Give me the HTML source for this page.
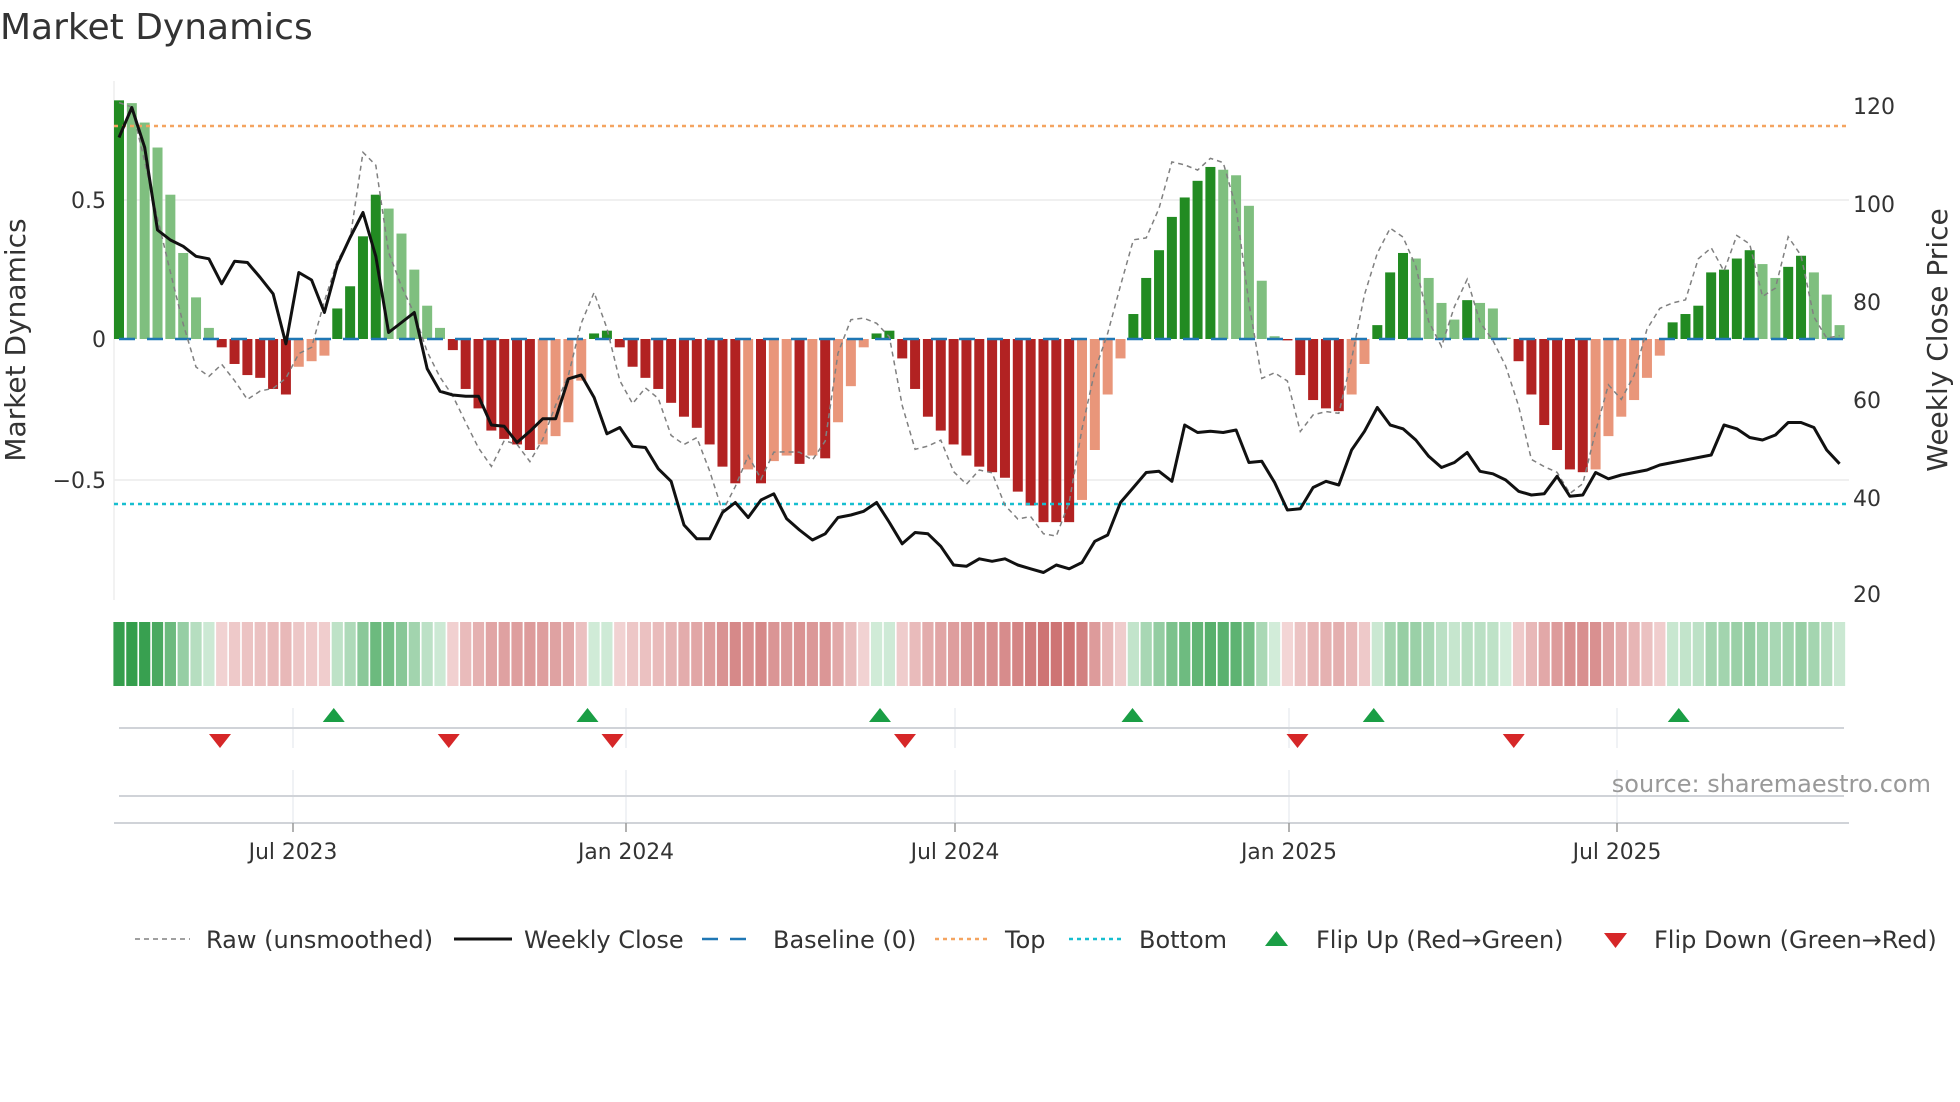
<!DOCTYPE html>
<html><head><meta charset="utf-8">
<style>
html,body{margin:0;padding:0;background:#fff;}
svg{display:block;font-family:"DejaVu Sans","Liberation Sans",sans-serif;}
</style></head>
<body>
<svg id="c" width="1960" height="1102" viewBox="0 0 1960 1102" xmlns="http://www.w3.org/2000/svg">
<rect width="1960" height="1102" fill="#fff"/>
<text x="0" y="39" font-size="36" fill="#333">Market Dynamics</text>
<line x1="114" y1="200" x2="1849" y2="200" stroke="#ececec" stroke-width="1.5"/>
<line x1="114" y1="480" x2="1849" y2="480" stroke="#ececec" stroke-width="1.5"/>
<line x1="114" y1="81" x2="114" y2="600" stroke="#eeeeee" stroke-width="1.5"/>
<g id="bars"></g>
<line x1="114" y1="126" x2="1849" y2="126" stroke="#f4a460" stroke-width="2.5" stroke-dasharray="4,4"/>
<line x1="114" y1="504" x2="1849" y2="504" stroke="#17becf" stroke-width="2.5" stroke-dasharray="4,4"/>
<line x1="119" y1="339" x2="1849" y2="339" stroke="#1f77b4" stroke-width="2.5" stroke-dasharray="16,12"/>
<polyline id="raw" fill="none" stroke="#808080" stroke-width="1.5" stroke-dasharray="5,4"/>
<polyline id="price" fill="none" stroke="#111" stroke-width="3" stroke-linejoin="round"/>
<g font-size="22" fill="#333" text-anchor="end">
<text x="106" y="208">0.5</text>
<text x="106" y="347">0</text>
<text x="106" y="488">−0.5</text>
</g>
<g font-size="22" fill="#333">
<text x="1853" y="114">120</text>
<text x="1853" y="212">100</text>
<text x="1853" y="310">80</text>
<text x="1853" y="408">60</text>
<text x="1853" y="506">40</text>
<text x="1853" y="602">20</text>
</g>
<text transform="translate(25,340) rotate(-90)" font-size="28" fill="#333" text-anchor="middle">Market Dynamics</text>
<text transform="translate(1947,340) rotate(-90)" font-size="28" fill="#333" text-anchor="middle">Weekly Close Price</text>
<g id="heat"></g>
<g stroke="#e6e8ee" stroke-width="1.2">
<line x1="293" y1="708" x2="293" y2="748"/><line x1="626" y1="708" x2="626" y2="748"/><line x1="955" y1="708" x2="955" y2="748"/><line x1="1289" y1="708" x2="1289" y2="748"/><line x1="1617" y1="708" x2="1617" y2="748"/>
<line x1="293" y1="770" x2="293" y2="823"/><line x1="626" y1="770" x2="626" y2="823"/><line x1="955" y1="770" x2="955" y2="823"/><line x1="1289" y1="770" x2="1289" y2="823"/><line x1="1617" y1="770" x2="1617" y2="823"/>
</g>
<line x1="119" y1="728" x2="1844" y2="728" stroke="#d0d3d8" stroke-width="2"/>
<line x1="119" y1="796" x2="1844" y2="796" stroke="#d0d3d8" stroke-width="2"/>
<line x1="114" y1="823" x2="1849" y2="823" stroke="#d0d3d8" stroke-width="2"/>
<g id="flips"></g>
<g stroke="#999" stroke-width="1.5">
<line x1="293" y1="823" x2="293" y2="832"/><line x1="626" y1="823" x2="626" y2="832"/><line x1="955" y1="823" x2="955" y2="832"/><line x1="1289" y1="823" x2="1289" y2="832"/><line x1="1617" y1="823" x2="1617" y2="832"/>
</g>
<g font-size="21.8" fill="#333" text-anchor="middle">
<text x="293" y="859">Jul 2023</text>
<text x="626" y="859">Jan 2024</text>
<text x="955" y="859">Jul 2024</text>
<text x="1289" y="859">Jan 2025</text>
<text x="1617" y="859">Jul 2025</text>
</g>
<text x="1931" y="792" font-size="24" fill="#999" text-anchor="end">source: sharemaestro.com</text>
<g font-size="24" fill="#333">
<line x1="135" y1="939" x2="190" y2="939" stroke="#808080" stroke-width="1.5" stroke-dasharray="5,4"/>
<text x="206" y="948">Raw (unsmoothed)</text>
<line x1="454" y1="939" x2="512" y2="939" stroke="#111" stroke-width="3"/>
<text x="524" y="948">Weekly Close</text>
<line x1="702" y1="939" x2="757" y2="939" stroke="#1f77b4" stroke-width="2.5" stroke-dasharray="16,12"/>
<text x="773" y="948">Baseline (0)</text>
<line x1="935" y1="939" x2="990" y2="939" stroke="#f4a460" stroke-width="2.5" stroke-dasharray="4,4"/>
<text x="1005" y="948">Top</text>
<line x1="1069" y1="939" x2="1125" y2="939" stroke="#17becf" stroke-width="2.5" stroke-dasharray="4,4"/>
<text x="1139" y="948">Bottom</text>
<polygon points="1265,946 1288,946 1276.5,931" fill="#1a9e45"/>
<text x="1316" y="948">Flip Up (Red→Green)</text>
<polygon points="1604,933 1627,933 1615.5,948" fill="#d62728"/>
<text x="1654" y="948">Flip Down (Green→Red)</text>
</g>
</svg>
<script>
var v=[.86,.85,.78,.69,.52,.31,.15,.04,-.03,-.09,-.13,-.14,-.18,-.2,-.1,-.08,-.06,
.11,.19,.37,.52,.47,.38,.25,.12,.04,
-.04,-.18,-.25,-.33,-.36,-.38,-.4,-.38,-.35,-.3,-.15,
.02,.03,
-.03,-.1,-.14,-.18,-.23,-.28,-.32,-.38,-.46,-.52,-.47,-.52,-.44,-.42,-.45,-.42,-.43,-.3,-.17,-.03,
.02,.03,
-.07,-.18,-.28,-.33,-.38,-.42,-.46,-.48,-.5,-.55,-.6,-.66,-.66,-.66,-.58,-.4,-.2,-.07,
.09,.22,.32,.44,.51,.57,.62,.61,.59,.48,.21,.01,
-.005,-.13,-.22,-.25,-.26,-.2,-.09,
.05,.24,.31,.29,.22,.13,.07,.14,.13,.11,.005,
-.08,-.2,-.31,-.4,-.47,-.48,-.47,-.35,-.28,-.22,-.14,-.06,
.06,.09,.12,.24,.25,.29,.32,.27,.22,.26,.30,.24,.16,.05];
while(v.length<135)v.push(.05);v=v.slice(0,135);
var py=[110,86,118,184,192,197,205,207,227,209,210,222,235,275,218,224,250,212,190,170,205,266,258,250,295,313,316,317,317,340,341,354,345,335,335,303,300,318,347,342,357,358,375,385,420,431,431,410,402,414,400,395,415,424,432,427,414,412,409,402,418,
435,426,427,437,452,453,447,449,447,452,455,458,452,455,450,433,428,402,390,378,377,385,340,346,345,346,344,370,369,386,408,407,390,385,388,360,345,326,340,343,352,365,374,370,362,377,379,384,393,396,395,381,397,396,378,383,380,378,376,372,370,368,366,364,340,343,350,352,348,338,338,342,360,371];
while(py.length<135)py.push(371);
var NS="http://www.w3.org/2000/svg";
function X(i){return 119+i*12.84;}
function el(t,a,p){var e=document.createElementNS(NS,t);for(var k in a)e.setAttribute(k,a[k]);p.appendChild(e);return e;}
var bars=document.getElementById('bars'),heat=document.getElementById('heat');
function mix(a,b,t){return 'rgb('+[0,1,2].map(function(k){return Math.round(a[k]+(b[k]-a[k])*t)}).join(',')+')';}
for(var i=0;i<135;i++){
 var x=X(i),val=v[i],prev=i?v[i-1]:0,y=339-val*277.5,c;
 if(val>=0)c=(val>=prev)?'#228b22':'#7fbf7f';else c=(val<=prev)?'#b22222':'#e9967a';
 el('rect',{x:x-5,y:Math.min(y,339),width:10,height:Math.max(Math.abs(339-y),1),fill:c},bars);
 var t=Math.min(Math.abs(val)/0.8,1),hc;
 if(val>=0)hc=mix([212,237,219],[52,158,76],t);else hc=mix([243,214,214],[206,116,116],Math.min(Math.abs(val)/0.66,1));
 el('rect',{x:x-5.6,y:622,width:11.2,height:64,fill:hc},heat);
}
var pts=[],rp=[];
for(var i=0;i<135;i++){
 pts.push(X(i).toFixed(1)+','+(py[i]*1.25).toFixed(1));
 var p=i?v[i-1]:v[0],n=i<134?v[i+1]:v[i];
 var r=v[i]+1.6*(n-p)/2+0.05*Math.sin(i*1.7);
 rp.push(X(i).toFixed(1)+','+(339-r*277.5).toFixed(1));
}
document.getElementById('price').setAttribute('points',pts.join(' '));
document.getElementById('raw').setAttribute('points',rp.join(' '));
var fl=document.getElementById('flips');
[267,470,704,906,1099,1343].forEach(function(d){var x=d*1.25;el('polygon',{points:(x-11)+',722 '+(x+11)+',722 '+x+',708',fill:'#1a9e45'},fl);});
[176,359,490,724,1038,1211].forEach(function(d){var x=d*1.25;el('polygon',{points:(x-11)+',734 '+(x+11)+',734 '+x+',748',fill:'#d62728'},fl);});
</script>
</body></html>
